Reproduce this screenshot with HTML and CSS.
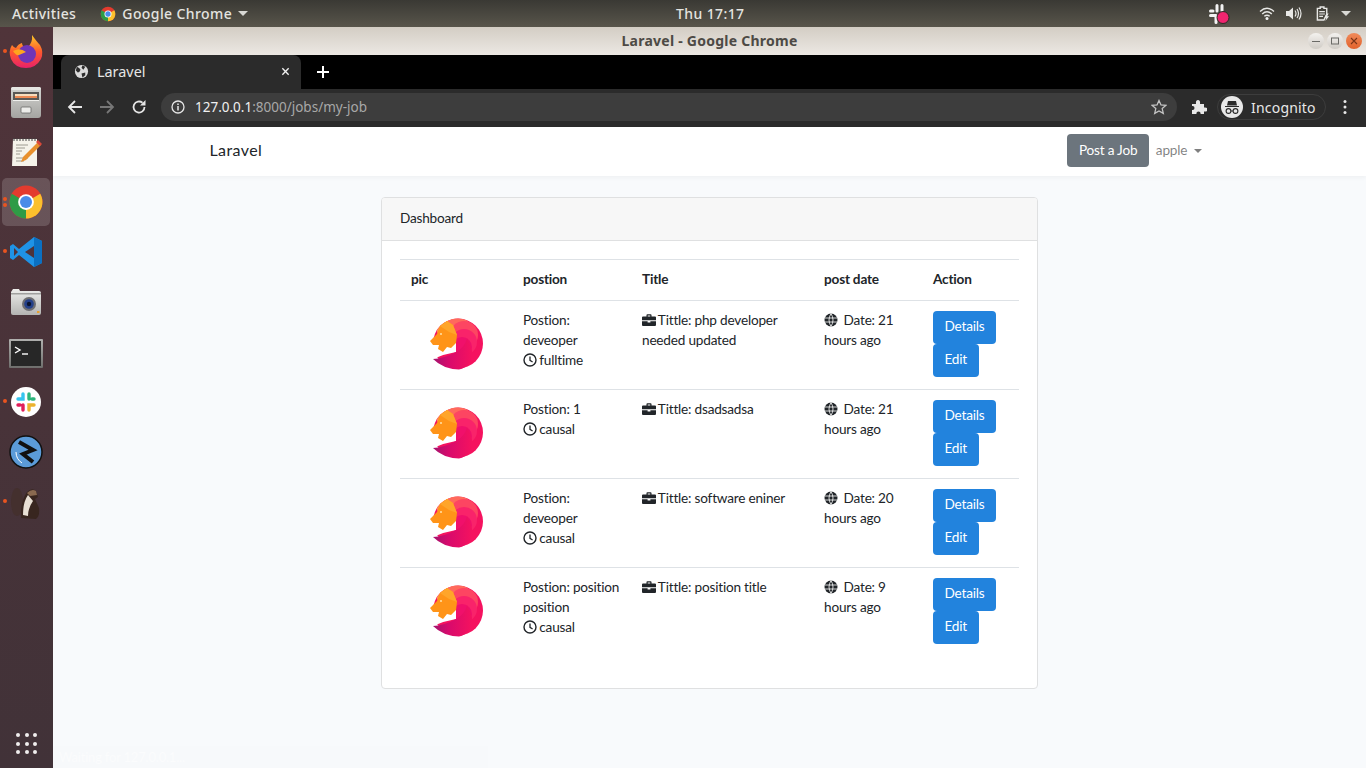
FILE: index.html
```html
<!DOCTYPE html>
<html>
<head>
  <meta charset="utf-8">
  <title>Laravel</title>
  <link rel="stylesheet" href="styles.css">
</head>
<body>
  <svg class="defs" width="0" height="0">
    <defs>
      <clipPath id="maneClip"><circle cx="29" cy="27.500" r="25"/></clipPath>
      <linearGradient id="crescent" x1="0" y1="0" x2="1" y2="0">
        <stop offset="0" stop-color="#a3146f"/>
        <stop offset=".4" stop-color="#d80a6c"/>
        <stop offset="1" stop-color="#f5125f"/>
      </linearGradient>
      <symbol id="lion" viewBox="0 0 54 54">
        <g clip-path="url(#maneClip)">
          <rect width="54" height="54" fill="#f5125f"/>
          <circle cx="19" cy="11" r="12" fill="#ff8a55"/>
          <circle cx="29" cy="14" r="13" fill="#ff6a5c"/>
          <circle cx="35" cy="19" r="14" fill="#fd4562"/>
          <circle cx="35" cy="26" r="13" fill="#f9236a"/>
          <circle cx="33" cy="31" r="10" fill="#f0106b"/>
        </g>
        <path d="M0 27H27V36Q15 38 4 43L0 44Z" fill="#fff"/>
        <path d="M4 43Q14 43 27 36Q36 31 38 22Q46 36 42 45Q36 53 30 53.500Q14 53 4 43Z" fill="url(#crescent)"/>
        <path d="M1 25L8 18L11 10L18 5L24 9L28 19L27 27L22 32L18 31L14 36L9 33L10 29L4 29Z" fill="#ff9418"/>
        <path d="M11 10L18 5L24 9L28 19L20 16Z" fill="#ffa52a"/>
        <circle cx="12" cy="18" r="1" fill="#ffe2a8"/>
      </symbol>
      <symbol id="clock" viewBox="0 0 14 14">
        <circle cx="7" cy="7" r="6" fill="none" stroke="currentColor" stroke-width="1.400"/>
        <path d="M7 3.400V7.400L9.600 9" fill="none" stroke="currentColor" stroke-width="1.300"/>
      </symbol>
      <symbol id="briefcase" viewBox="0 0 14 13">
        <path d="M4.500 3V1.600Q4.500.7 5.400.7H8.600Q9.500.7 9.500 1.600V3H13Q14 3 14 4V6.800H0V4Q0 3 1 3ZM5.700 3H8.300V1.900H5.700Z" fill="currentColor" fill-rule="evenodd"/>
        <path d="M0 7.700H5.600V9H8.400V7.700H14V11.400Q14 12.400 13 12.400H1Q0 12.400 0 11.400Z" fill="currentColor"/>
      </symbol>
      <symbol id="globe" viewBox="0 0 14 14">
        <circle cx="7" cy="7" r="6.500" fill="currentColor"/>
        <path d="M.5 5H13.500M.5 9H13.500M7 .5Q3 7 7 13.500Q11 7 7 .5Z" fill="none" stroke="#fff" stroke-width=".8"/>
      </symbol>
    </defs>
  </svg>

  <header class="topbar">
    <span class="activities">Activities</span>
    <span class="app-menu">
      <svg class="app-icon" viewBox="0 0 48 48">
        <circle cx="24" cy="24" r="22" fill="#e33b2e"/>
        <path d="M24 24L43 13A22 22 0 0 1 24 46Z" fill="#fbc02d"/>
        <path d="M24 24L24 46A22 22 0 0 1 5 13Z" fill="#2e9b46"/>
        <circle cx="24" cy="24" r="10.500" fill="#fff"/>
        <circle cx="24" cy="24" r="8" fill="#4a8be8"/>
      </svg>
      Google Chrome
      <i class="caret caret-top"></i>
    </span>
    <span class="clock">Thu 17:17</span>
    <span class="tray">
      <svg class="tray-slack" viewBox="0 0 22 22">
        <g fill="none" stroke="#f2f2f2" stroke-width="3" stroke-linecap="round">
          <path d="M9 2.500V8M2.500 8H5M2.500 12.500H8M14 2.500V8M8 14V19.500"/>
        </g>
        <circle cx="15" cy="14.500" r="6" fill="#f0246f" stroke="#2c2a26" stroke-width="1"/>
      </svg>
      <svg class="tray-icon wifi" viewBox="0 0 16 14">
        <path d="M1 5Q8-1.500 15 5M3.200 7.500Q8 3 12.800 7.500M5.300 9.800Q8 7.500 10.700 9.800" fill="none" stroke="#e8e8e6" stroke-width="1.400"/>
        <circle cx="8" cy="12" r="1.500" fill="#f2f2f2"/>
      </svg>
      <svg class="tray-icon volume" viewBox="0 0 16 14">
        <path d="M0 4.500H3L7 1V13L3 9.500H0Z" fill="#e8e8e6"/>
        <path d="M9 4Q11 7 9 10M11 2.500Q14 7 11 11.500M13 1Q17 7 13 13" fill="none" stroke="#e8e8e6" stroke-width="1.200"/>
      </svg>
      <svg class="tray-icon battery" viewBox="0 0 14 16">
        <path d="M1 2.500H4V1H8V2.500H11V9L8 15H1Z" fill="none" stroke="#e8e8e6" stroke-width="1.500"/>
        <path d="M3 6H9M3 8.500H9M3 11H7" stroke="#e8e8e6" stroke-width="1.200"/>
        <path d="M11 8L8.500 12.500H10.500L9.500 16L13.500 11H11.500L13 8Z" fill="#e8e8e6"/>
      </svg>
      <i class="caret caret-top"></i>
    </span>
  </header>

  <div class="desktop">
    <nav class="dock">
      <div class="dock-item">
        <i class="pip"></i>
        <svg viewBox="0 0 36 36">
          <defs>
            <linearGradient id="fxOuter" x1="0" y1="0" x2="0" y2="1">
              <stop offset="0" stop-color="#ffc928"/>
              <stop offset=".5" stop-color="#ff5a2d"/>
              <stop offset="1" stop-color="#e8206a"/>
            </linearGradient>
          </defs>
          <path d="M24 1Q29 8 32 11Q36 18 33 25Q28 34 18 34Q7 34 3 25Q0 17 4 11Q6 14 8 14Q10 10 14 9Q14 13 19 14Q25 9 24 1Z" fill="url(#fxOuter)"/>
          <circle cx="19" cy="20" r="9" fill="#6f35b8"/>
          <path d="M5 17Q12 13 18 18L11 21Q8 22 5 17Z" fill="#ffa51e"/>
        </svg>
      </div>
      <div class="dock-item">
        <svg viewBox="0 0 36 36">
          <defs>
            <linearGradient id="cabinet" x1="0" y1="0" x2="0" y2="1">
              <stop offset="0" stop-color="#d4d4d1"/>
              <stop offset="1" stop-color="#a4a4a1"/>
            </linearGradient>
          </defs>
          <rect x="3" y="3" width="30" height="31" rx="3" fill="url(#cabinet)"/>
          <rect x="3" y="3" width="30" height="3" rx="1.500" fill="#e6e6e3"/>
          <rect x="5" y="8" width="26" height="8" fill="#5a5855"/>
          <rect x="7" y="10" width="22" height="2" fill="#f7dcbc"/>
          <rect x="7" y="12" width="22" height="2" fill="#ec8a55"/>
          <rect x="5" y="16" width="26" height="1" fill="#f0f0ed"/>
          <rect x="13" y="23" width="10" height="6" rx="1" fill="#ecece9" stroke="#6a6a68" stroke-width=".8"/>
        </svg>
      </div>
      <div class="dock-item">
        <svg viewBox="0 0 36 36">
          <path d="M5 5H29V32H4Z" fill="#f5f3ea"/>
          <path d="M6 4V7M9 4V7M12 4V7M15 4V7M18 4V7M21 4V7M24 4V7M27 4V7" stroke="#444" stroke-width="1"/>
          <path d="M8 11H20M8 14H17M8 17H14M8 20H12M8 24H20M8 27H16" stroke="#9c9a90" stroke-width="1"/>
          <path d="M30 8L33 11L18 26L13 28L15 23Z" fill="#e8902c"/>
          <path d="M30 6L34 10L32 12L28 8Z" fill="#d9473a"/>
        </svg>
      </div>
      <div class="dock-item active">
        <i class="pip pip-double"></i>
        <svg viewBox="0 0 48 48">
          <circle cx="24" cy="24" r="22" fill="#e33b2e"/>
          <path d="M24 24L43 13A22 22 0 0 1 24 46Z" fill="#fbc02d"/>
          <path d="M24 24L24 46A22 22 0 0 1 5 13Z" fill="#2e9b46"/>
          <circle cx="24" cy="24" r="10.500" fill="#fff"/>
          <circle cx="24" cy="24" r="8" fill="#4a8be8"/>
        </svg>
      </div>
      <div class="dock-item">
        <i class="pip"></i>
        <svg viewBox="0 0 36 36">
          <path d="M26 3L34 7V29L26 33L11 21L5 26L2 24V12L5 10L11 15Z" fill="#1f93e6"/>
          <path d="M26 3L34 7V29L26 33Z" fill="#0b70c2"/>
          <path d="M26 12L17 18L26 24Z" fill="#4f3339"/>
          <path d="M6 14V22L10 18Z" fill="#4f3339"/>
        </svg>
      </div>
      <div class="dock-item">
        <svg viewBox="0 0 36 36">
          <defs>
            <linearGradient id="camera" x1="0" y1="0" x2="0" y2="1">
              <stop offset="0" stop-color="#eeeeec"/>
              <stop offset="1" stop-color="#b4b4b2"/>
            </linearGradient>
          </defs>
          <path d="M3 8L5 5H11L12 7H31Q33 7 33 9V29Q33 31 31 31H5Q3 31 3 29Z" fill="url(#camera)"/>
          <rect x="3" y="9" width="30" height="1.500" fill="#a0a09e"/>
          <circle cx="21" cy="20" r="7" fill="#6e6e72"/>
          <circle cx="21" cy="20" r="4.800" fill="#24408a"/>
          <circle cx="21" cy="20" r="2.200" fill="#0b1430"/>
          <rect x="29" y="27" width="2.500" height="2" fill="#e8a030"/>
        </svg>
      </div>
      <div class="dock-item">
        <svg viewBox="0 0 36 36">
          <defs>
            <linearGradient id="bezel" x1="0" y1="0" x2="0" y2="1">
              <stop offset="0" stop-color="#b0b0ae"/>
              <stop offset="1" stop-color="#6e6e6c"/>
            </linearGradient>
          </defs>
          <rect x="1" y="5" width="34" height="29" rx="1" fill="url(#bezel)"/>
          <rect x="3" y="7" width="30" height="25" fill="#272727"/>
          <path d="M7 13L12 16L7 19" fill="none" stroke="#fff" stroke-width="1.400"/>
          <path d="M14 20H20" stroke="#fff" stroke-width="1.400"/>
        </svg>
      </div>
      <div class="dock-item">
        <i class="pip"></i>
        <svg viewBox="0 0 36 36">
          <circle cx="18" cy="18" r="15" fill="#fff"/>
          <g fill="none" stroke-width="3.400" stroke-linecap="round">
            <path d="M15 10V15H10" stroke="#36c5f0"/>
            <path d="M21 10V15M26 15H24" stroke="#2eb67d"/>
            <path d="M21 26V21H26" stroke="#ecb22e"/>
            <path d="M15 26V21M10 21H12" stroke="#e01e5a"/>
          </g>
        </svg>
      </div>
      <div class="dock-item">
        <svg viewBox="0 0 36 36">
          <circle cx="18" cy="18" r="16" fill="#5b9bd8" stroke="#111" stroke-width="1.500"/>
          <path d="M11 8L25 16L15 20L25 28" fill="none" stroke="#111" stroke-width="4"/>
          <path d="M8 18Q8 25 14 29" fill="none" stroke="#fff" stroke-width="1"/>
        </svg>
      </div>
      <div class="dock-item">
        <i class="pip"></i>
        <svg viewBox="0 0 36 36">
          <ellipse cx="9" cy="18" rx="6" ry="14" fill="#44302e"/>
          <path d="M13 34Q12 18 19 8Q24 3 28 7L30 13L27 15L31 24Q32 32 28 35Z" fill="#38261f"/>
          <path d="M15 31Q15 18 20 11L25 17Q20 24 20 32Z" fill="#e8e0d4"/>
          <path d="M19 9Q24 4 28 7L29 11L22 12Z" fill="#8a6a50"/>
        </svg>
      </div>
      <div class="apps-grid">
        <i></i><i></i><i></i><i></i><i></i><i></i><i></i><i></i><i></i>
      </div>
    </nav>

    <div class="window">
      <div class="titlebar">
        <span class="title">Laravel - Google Chrome</span>
        <span class="win-buttons">
          <span class="win-btn"><svg viewBox="0 0 10 10"><path d="M1 5.500H9" stroke="#6a6a66" stroke-width="1"/></svg></span>
          <span class="win-btn"><svg viewBox="0 0 10 10"><rect x="1.500" y="2" width="7" height="6" fill="none" stroke="#6a6a66" stroke-width="1"/></svg></span>
          <span class="win-btn close"><svg viewBox="0 0 10 10"><path d="M2 2L8 8M8 2L2 8" stroke="#7a3418" stroke-width="1.100"/></svg></span>
        </span>
      </div>

      <div class="tabstrip">
        <div class="tab">
          <svg class="favicon" viewBox="0 0 16 16">
            <circle cx="8" cy="8" r="7" fill="#dcdcdc"/>
            <path d="M3 3Q6 4 7 6Q6 9 4 9L2 7ZM9 1.500L12 3L10 6L8 4ZM8 10L12 9L12 12L9 14.500Z" fill="#2d2d2d"/>
          </svg>
          <span class="tab-title">Laravel</span>
          <svg class="tab-close" viewBox="0 0 10 10"><path d="M1.500 1.500L8.500 8.500M8.500 1.500L1.500 8.500" stroke="#f0f0f0" stroke-width="1.500"/></svg>
        </div>
        <svg class="new-tab" viewBox="0 0 12 12"><path d="M6 0V12M0 6H12" stroke="#fff" stroke-width="2"/></svg>
      </div>

      <div class="toolbar">
        <svg class="tool" viewBox="0 0 16 16"><path d="M15 8H2M8 2L2 8L8 14" fill="none" stroke="#e6e6e6" stroke-width="1.800"/></svg>
        <svg class="tool" viewBox="0 0 16 16"><path d="M1 8H14M8 2L14 8L8 14" fill="none" stroke="#777" stroke-width="1.800"/></svg>
        <svg class="tool" viewBox="0 0 16 16"><path d="M13.500 8A5.500 5.500 0 1 1 11.500 3.800" fill="none" stroke="#e6e6e6" stroke-width="1.800"/><path d="M14.500 1V6.500H9Z" fill="#e6e6e6"/></svg>
        <div class="omnibox">
          <svg class="info" viewBox="0 0 14 14">
            <circle cx="7" cy="7" r="6" fill="none" stroke="#e6e6e6" stroke-width="1.300"/>
            <path d="M7 6V10.500M7 3.500V5" stroke="#e6e6e6" stroke-width="1.500"/>
          </svg>
          <span class="url"><b>127.0.0.1</b>:8000/jobs/my-job</span>
          <svg class="star" viewBox="0 0 16 16"><path d="M8 1.500L10 6L14.800 6.400L11.200 9.600L12.300 14.400L8 11.900L3.700 14.400L4.800 9.600L1.200 6.400L6 6Z" fill="none" stroke="#c4c4c4" stroke-width="1.300"/></svg>
        </div>
        <svg class="puzzle" viewBox="0 0 16 16"><path d="M1 5H5Q4.500 1 7 1Q9.500 1 9 5H13V8.500Q16.500 8 16.500 10.500Q16.500 13 13 12.500V15H9.500Q10 12.500 7.500 12.500Q5 12.500 5.500 15H1V11Q3.500 11.500 3.500 9Q3.500 6.500 1 7Z" fill="#e8e8e8"/></svg>
        <div class="incognito">
          <svg class="spy" viewBox="0 0 22 22">
            <circle cx="11" cy="11" r="11" fill="#e8e8e8"/>
            <path d="M4 10H18V11H4ZM7 5H15L16 9.500H6Z" fill="#2a2a2a"/>
            <circle cx="7.500" cy="15" r="2.400" fill="none" stroke="#2a2a2a" stroke-width="1.100"/>
            <circle cx="14.500" cy="15" r="2.400" fill="none" stroke="#2a2a2a" stroke-width="1.100"/>
            <path d="M10 15H12" stroke="#2a2a2a" stroke-width="1"/>
          </svg>
          <span>Incognito</span>
        </div>
        <svg class="kebab" viewBox="0 0 4 16"><circle cx="2" cy="2.500" r="1.500" fill="#e8e8e8"/><circle cx="2" cy="8" r="1.500" fill="#e8e8e8"/><circle cx="2" cy="13.500" r="1.500" fill="#e8e8e8"/></svg>
      </div>

      <div class="page">
        <div class="navbar">
          <div class="nav-inner">
            <a class="brand">Laravel</a>
            <div class="nav-right">
              <a class="btn btn-secondary">Post a Job</a>
              <a class="user-link">apple <i class="caret caret-nav"></i></a>
            </div>
          </div>
        </div>

        <div class="card">
          <div class="card-header">Dashboard</div>
          <div class="card-body">
            <table class="jobs">
              <thead>
                <tr>
                  <th class="col-pic">pic</th>
                  <th class="col-pos">postion</th>
                  <th class="col-title">Title</th>
                  <th class="col-date">post date</th>
                  <th class="col-action">Action</th>
                </tr>
              </thead>
              <tbody>
                <tr>
                  <td><svg class="lion"><use href="#lion"/></svg></td>
                  <td>Postion: deveoper<br><svg class="fa"><use href="#clock"/></svg> fulltime</td>
                  <td><svg class="fa"><use href="#briefcase"/></svg> Tittle: php developer needed updated</td>
                  <td><svg class="fa"><use href="#globe"/></svg>&nbsp; Date: 21 hours ago</td>
                  <td class="actions"><a class="btn btn-primary">Details</a><a class="btn btn-primary">Edit</a></td>
                </tr>
                <tr>
                  <td><svg class="lion"><use href="#lion"/></svg></td>
                  <td>Postion: 1<br><svg class="fa"><use href="#clock"/></svg> causal</td>
                  <td><svg class="fa"><use href="#briefcase"/></svg> Tittle: dsadsadsa</td>
                  <td><svg class="fa"><use href="#globe"/></svg>&nbsp; Date: 21 hours ago</td>
                  <td class="actions"><a class="btn btn-primary">Details</a><a class="btn btn-primary">Edit</a></td>
                </tr>
                <tr>
                  <td><svg class="lion"><use href="#lion"/></svg></td>
                  <td>Postion: deveoper<br><svg class="fa"><use href="#clock"/></svg> causal</td>
                  <td><svg class="fa"><use href="#briefcase"/></svg> Tittle: software eniner</td>
                  <td><svg class="fa"><use href="#globe"/></svg>&nbsp; Date: 20 hours ago</td>
                  <td class="actions"><a class="btn btn-primary">Details</a><a class="btn btn-primary">Edit</a></td>
                </tr>
                <tr>
                  <td><svg class="lion"><use href="#lion"/></svg></td>
                  <td>Postion: position position<br><svg class="fa"><use href="#clock"/></svg> causal</td>
                  <td><svg class="fa"><use href="#briefcase"/></svg> Tittle: position title</td>
                  <td><svg class="fa"><use href="#globe"/></svg>&nbsp; Date: 9 hours ago</td>
                  <td class="actions"><a class="btn btn-primary">Details</a><a class="btn btn-primary">Edit</a></td>
                </tr>
              </tbody>
            </table>
          </div>
        </div>

        <div class="status-bubble">Waiting for 127.0.0.1...</div>
      </div>
    </div>
  </div>
</body>
</html>
```

FILE: styles.css
```css
* {
  box-sizing: border-box;
}
html, body {
  margin: 0;
  width: 1366px;
  height: 768px;
  overflow: hidden;
}
body {
  display: flex;
  flex-direction: column;
  font-family: "Lato", "Noto Sans", sans-serif;
  color: #212529;
}
.defs {
  position: absolute;
}

/* gnome top bar */
.topbar {
  height: 27px;
  flex: none;
  display: flex;
  align-items: center;
  position: relative;
  padding: 0 15px 0 12px;
  background: linear-gradient(#3a3934, #58554b);
  color: #e4e4e0;
  font-family: "Noto Sans", sans-serif;
  font-size: 14px;
  font-weight: 500;
  letter-spacing: .4px;
}
.activities {
  margin-right: 24px;
}
.app-menu {
  display: flex;
  align-items: center;
}
.app-icon {
  width: 16px;
  height: 16px;
  margin-right: 6px;
}
.caret-top {
  border-top: 5px solid #d8d8d4;
  border-left: 5px solid transparent;
  border-right: 5px solid transparent;
  margin-left: 6px;
}
.clock {
  position: absolute;
  left: 676px;
}
.tray {
  margin-left: auto;
  display: flex;
  align-items: center;
}
.tray-slack {
  width: 22px;
  height: 22px;
  margin-right: 29px;
}
.tray-icon {
  width: 16px;
  height: 15px;
}
.wifi {
  margin-right: 11px;
}
.volume {
  margin-right: 13px;
}
.tray .caret-top {
  margin-left: 10px;
}

/* left dock */
.desktop {
  flex: 1;
  display: flex;
  min-height: 0;
}
.dock {
  width: 53px;
  flex: none;
  display: flex;
  flex-direction: column;
  background: linear-gradient(#50343a, #413238);
  position: relative;
}
.dock-item {
  height: 50px;
  flex: none;
  display: flex;
  align-items: center;
  justify-content: center;
  position: relative;
  margin: 0 3px 0 2px;
}
.dock-item svg {
  width: 36px;
  height: 36px;
}
.dock-item.active {
  background: rgba(255, 255, 255, .16);
  border-radius: 5px;
  height: 48px;
  margin-top: 1px;
  margin-bottom: 1px;
}
.pip {
  position: absolute;
  left: 1px;
  top: 22px;
  width: 4px;
  height: 4px;
  border-radius: 50%;
  background: #e95420;
}
.pip-double {
  top: 19px;
  box-shadow: 0 6px 0 #e95420;
}
.apps-grid {
  position: absolute;
  left: 16px;
  top: 706px;
  display: grid;
  grid-template-columns: repeat(3, 4px);
  gap: 4.500px;
}
.apps-grid i {
  width: 4px;
  height: 4px;
  border-radius: 50%;
  background: #f0eeee;
}

/* chrome */
.window {
  flex: 1;
  display: flex;
  flex-direction: column;
  min-width: 0;
}
.titlebar {
  height: 28px;
  flex: none;
  position: relative;
  display: flex;
  align-items: center;
  justify-content: center;
  padding-bottom: 2px;
  background: linear-gradient(#d3cdc4, #ece8e3);
  color: #4d4a45;
  font-family: "Noto Sans", sans-serif;
  font-size: 14px;
  font-weight: 700;
  letter-spacing: .25px;
}
.win-buttons {
  position: absolute;
  right: 4px;
  top: 6px;
  display: flex;
  gap: 3px;
}
.win-btn {
  width: 16px;
  height: 16px;
  border-radius: 50%;
  background: linear-gradient(#f4f2ef, #cfcbc5);
  display: flex;
  align-items: center;
  justify-content: center;
}
.win-btn svg {
  width: 10px;
  height: 10px;
}
.win-btn.close {
  background: linear-gradient(#f08a5a, #e2622c);
}
.tabstrip {
  height: 34px;
  flex: none;
  display: flex;
  align-items: center;
  background: #000;
  padding-left: 8px;
}
.tab {
  width: 240px;
  height: 34px;
  display: flex;
  align-items: center;
  padding: 0 11px 1px 13px;
  background: #2b2b2b;
  border-radius: 8px 8px 0 0;
  color: #e6e6e6;
  font-family: "Noto Sans", sans-serif;
  font-size: 14.400px;
}
.favicon {
  width: 15px;
  height: 15px;
  margin-right: 8px;
}
.tab-close {
  width: 9px;
  height: 9px;
  margin-left: auto;
}
.new-tab {
  width: 12px;
  height: 12px;
  margin-left: 16px;
}
.toolbar {
  height: 38px;
  flex: none;
  display: flex;
  align-items: center;
  background: #2b2b2b;
  padding: 0 0 2px 14px;
}
.tool {
  width: 16px;
  height: 16px;
  margin-right: 16px;
}
.omnibox {
  width: 1016px;
  height: 28px;
  margin-left: -2px;
  display: flex;
  align-items: center;
  background: #3d3d3d;
  border-radius: 14px;
  padding: 0 10px;
  color: #a8a8a8;
  font-family: "Noto Sans", sans-serif;
  font-size: 13.500px;
}
.omnibox b {
  color: #f0f0f0;
  font-weight: 400;
}
.info {
  width: 14px;
  height: 14px;
  margin-right: 10px;
}
.star {
  width: 16px;
  height: 16px;
  margin-left: auto;
}
.puzzle {
  width: 16px;
  height: 16px;
  margin-left: 14px;
}
.incognito {
  height: 26px;
  margin-left: 10px;
  display: flex;
  align-items: center;
  padding: 0 9px 0 3px;
  border: 1px solid #3d3d3d;
  border-radius: 13px;
  color: #e8e8e8;
  font-family: "Noto Sans", sans-serif;
  font-size: 14px;
  letter-spacing: .2px;
}
.spy {
  width: 22px;
  height: 22px;
  margin-right: 8px;
}
.kebab {
  width: 4px;
  height: 16px;
  margin-left: 17px;
}

/* laravel page */
.page {
  flex: 1;
  position: relative;
  background: #f8fafc;
  font-size: 13.600px;
  letter-spacing: -.2px;
  line-height: 20px;
}
.navbar {
  height: 49px;
  padding-bottom: 2px;
  background: #fff;
  box-shadow: 0 2px 4px rgba(0, 0, 0, .04);
  display: flex;
  justify-content: center;
}
.nav-inner {
  width: 1000px;
  display: flex;
  align-items: center;
  justify-content: space-between;
}
.brand {
  font-size: 16px;
  letter-spacing: .4px;
  margin-bottom: 2px;
}
.nav-right {
  display: flex;
  align-items: center;
}
.user-link {
  color: rgba(0, 0, 0, .5);
  padding: 0 8px 2px 7px;
}
.caret-nav {
  display: inline-block;
  vertical-align: 2px;
  margin-left: 3px;
  border-top: 4px solid rgba(0, 0, 0, .5);
  border-left: 4px solid transparent;
  border-right: 4px solid transparent;
}
.btn {
  display: block;
  height: 33px;
  line-height: 29px;
  border: 1px solid transparent;
  border-radius: 4px;
  padding: 0 10.500px;
}
.btn-secondary {
  background: #6c757d;
  color: #fff;
  line-height: 31px;
}
.btn-primary {
  background: #2283dd;
  color: #fff;
}
.card {
  width: 657px;
  margin: 21px auto 0;
  background: #fff;
  border: 1px solid #dfe0e1;
  border-radius: 4px;
}
.card-header {
  height: 43px;
  padding: 0 18px;
  line-height: 41px;
  background: #f7f7f7;
  border-bottom: 1px solid #dfe0e1;
  border-radius: 3px 3px 0 0;
}
.card-body {
  padding: 18px 18px 32px;
}
.jobs {
  width: 619px;
  table-layout: fixed;
  border-collapse: separate;
  border-spacing: 0;
}
.jobs th {
  height: 41px;
  padding: 0 11px 2px;
  text-align: left;
  font-weight: 700;
  border-top: 1px solid #dee2e6;
}
.col-pic { width: 112px; }
.col-pos { width: 119px; }
.col-title { width: 182px; }
.col-date { width: 109px; }
.col-action { width: 97px; }
.jobs td {
  height: 89px;
  padding: 9px 8px 0 11px;
  vertical-align: top;
  border-top: 1px solid #dee2e6;
}
.jobs td.actions {
  padding-top: 10px;
}
.actions .btn {
  width: fit-content;
}
.lion {
  display: block;
  width: 54px;
  height: 54px;
  margin: 6px 0 0 18px;
}
.fa {
  width: 14px;
  height: 14px;
  margin-right: -1px;
  vertical-align: -2px;
}
.status-bubble {
  position: absolute;
  left: 0;
  bottom: 0;
  width: 435px;
  height: 22px;
  padding-left: 6px;
  background: #f7f9fb;
  color: #fbfcfd;
  font-size: 13px;
  line-height: 22px;
}
```
